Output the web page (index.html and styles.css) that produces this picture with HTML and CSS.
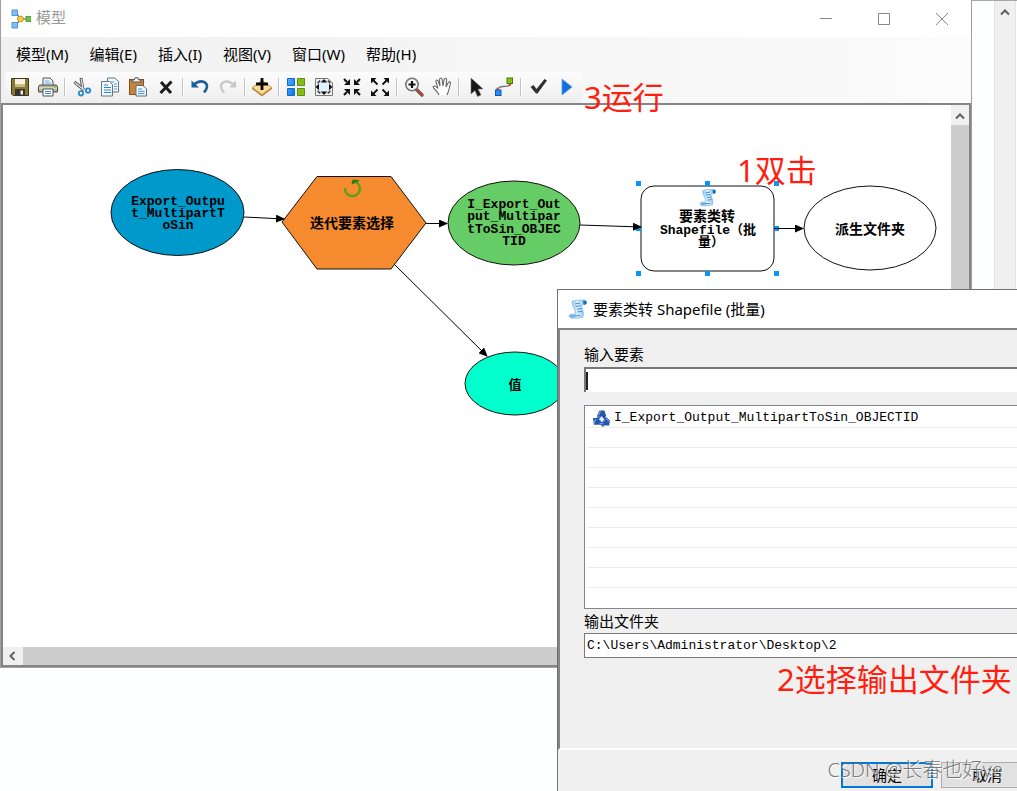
FILE: index.html
```html
<!DOCTYPE html>
<html lang="zh-CN">
<head>
<meta charset="utf-8">
<title>模型</title>
<link rel="stylesheet" href="styles.css">
</head>
<body>
<svg class="defs" aria-hidden="true">
  <defs>
    <linearGradient id="blueSq" x1="0" y1="0" x2="1" y2="1"><stop offset="0" stop-color="#4fb0ff"/><stop offset="1" stop-color="#0a74e0"/></linearGradient>
    <linearGradient id="paper" x1="0" y1="0" x2="1" y2="0"><stop offset="0" stop-color="#7cc0f4"/><stop offset=".5" stop-color="#e0f2ff"/><stop offset="1" stop-color="#6cb2ea"/></linearGradient>
    <symbol id="scroll" viewBox="0 0 20 20">
      <path d="M4 2.500Q7 1 16 1Q19 1 18.500 4Q18 6 16 5.500Q12.500 5.500 14 9Q16 14 15 18Q9 20 3 19Q.5 18 1.500 16Q3 14.500 7 15.500Q8 13 6 9Q4 6 4 2.500Z" fill="url(#paper)" stroke="#6baede" stroke-width=".7"/>
      <path d="M15 2Q19 1 18.500 4.500Q17 6.500 15.500 5Z" fill="#1f68b4"/>
      <path d="M7 5L12 4M7.500 7.500L12.500 6.700M9 10.200L13.500 9.500M9.500 13L14 12.300M3 17.300L12 16.500" stroke="#3c8ed2" stroke-width="1.100" fill="none"/>
    </symbol>
  </defs>
</svg>
<div class="desktop">
  <main class="window">
    <header class="titlebar">
      <svg class="app-icon" viewBox="0 0 20 20"><path d="M5 3L9 10L5 17M9 10H18" stroke="#2c5f94" stroke-width="1.200" fill="none"/><rect x="1" y="1" width="5.500" height="5.500" fill="#7fc0f2" stroke="#3a86cc" stroke-width=".8"/><rect x="1" y="13.500" width="5.500" height="5.500" fill="#7fc0f2" stroke="#3a86cc" stroke-width=".8"/><circle cx="9.500" cy="10" r="3" fill="#f8c840" stroke="#b9861a" stroke-width=".8"/><rect x="15" y="7.500" width="5" height="5" fill="#70c544" stroke="#3f8e22" stroke-width=".8"/></svg>
      <span class="title">模型</span>
      <button class="caption" aria-label="最小化"><svg viewBox="0 0 12 12"><path d="M0 5.500H12"/></svg></button>
      <button class="caption" aria-label="最大化"><svg viewBox="0 0 12 12"><path d="M.5 .5H11.500V11.500H.5Z"/></svg></button>
      <button class="caption" aria-label="关闭"><svg viewBox="0 0 12 12"><path d="M0 0L12 12M12 0L0 12"/></svg></button>
    </header>
    <nav class="menubar">
      <button>模型(M)</button><button>编辑(E)</button><button>插入(I)</button><button>视图(V)</button><button>窗口(W)</button><button>帮助(H)</button>
    </nav>
    <div class="toolrow">
    <div class="toolbar" role="toolbar">
      <button aria-label="保存"><svg viewBox="0 0 20 20"><path d="M1.500 1.500H18.500V18.500H3L1.500 17Z" fill="#8b7830" stroke="#3e3a22"/><rect x="5" y="2" width="10" height="7.500" fill="#f5f2e2"/><path d="M5 7H15V9.500H5Z" fill="#c9bf8c"/><rect x="5" y="12" width="10" height="6.500" fill="#35352f"/><rect x="10.500" y="13.500" width="2.500" height="4" fill="#eee"/></svg></button>
      <button aria-label="打印"><svg viewBox="0 0 20 20"><path d="M5 9V1H12L15 4V9Z" fill="#e8f3fc" stroke="#555"/><path d="M7 4H11M7 6H13" stroke="#71aee2"/><path d="M2 8H18Q20 8 19.500 15H.5Q0 8 2 8Z" fill="#b7b39a" stroke="#4b4b43"/><path d="M1 11H19" stroke="#f1efdd"/><path d="M5 12H15V19H5Z" fill="#fff" stroke="#555"/><path d="M7 14.500H13M7 16.500H13" stroke="#3b92dc"/><circle cx="17" cy="9.800" r="1" fill="#68c531"/></svg></button>
      <i class="sep"></i>
      <button aria-label="剪切"><svg viewBox="0 0 20 20"><path d="M2.500 5L12 13M9 1L11 13" stroke="#5a5a5a" stroke-width="3"/><path d="M3 5.500L12 13M9.300 2L11 12" stroke="#e8e8e8" stroke-width="1.200"/><circle cx="9" cy="16.300" r="2.200" fill="#fff" stroke="#2588ce" stroke-width="1.800"/><circle cx="16" cy="13.500" r="2.200" fill="#fff" stroke="#2588ce" stroke-width="1.800"/></svg></button>
      <button aria-label="复制"><svg viewBox="0 0 20 20"><path d="M7.500 1H15L18.500 4.500V15H7.500Z" fill="#eef6fd" stroke="#677680"/><path d="M10 5H14M14 7H17M14 9.500H17M14 12H17" stroke="#55a1e0"/><path d="M1.500 4.500H9.500L12.500 7.500V19H1.500Z" fill="#f5faff" stroke="#667580"/><path d="M4 8H8M4 10.500H11M4 13H11M4 15.500H11" stroke="#2b87d6" stroke-width="1.200"/></svg></button>
      <button aria-label="粘贴"><svg viewBox="0 0 20 20"><rect x="1.500" y="2.500" width="14" height="15" fill="#c98238" stroke="#83501c"/><path d="M4 5V3H6L7 .8H10L11 3H13V5Z" fill="#ededed" stroke="#555"/><path d="M8 8.500H15L18.500 12V19H8Z" fill="#f3f9ff" stroke="#5f6c78"/><path d="M10 12H14M10 14.300H16.500M10 16.600H16.500" stroke="#3b91da"/></svg></button>
      <button aria-label="删除"><svg viewBox="0 0 20 20"><path d="M5 5L15 16M15.500 4.500L4.500 16" stroke="#1b1b1b" stroke-width="3"/></svg></button>
      <i class="sep"></i>
      <button aria-label="撤销"><svg viewBox="0 0 20 20"><path d="M3.500 8Q9 3 14 5Q20 8 14 15.500" stroke="#1b5f9f" stroke-width="2.600" fill="none"/><path d="M1.500 3.500V10.500H9Z" fill="#1b5f9f"/></svg></button>
      <button aria-label="重做"><svg viewBox="0 0 20 20"><path d="M16 8Q11 3 6 5Q0 8 6 15.500" stroke="#c9c9c9" stroke-width="2.400" fill="none"/><path d="M18 3.500V10.500H11Z" fill="#c6c6c6"/></svg></button>
      <i class="sep"></i>
      <button aria-label="添加数据"><svg viewBox="0 0 20 20"><path d="M0 10.500L10 3L20 10.500V12L10 19.500L0 12Z" fill="#b3893f"/><path d="M.5 10.500L10 4L19.500 10.500L10 17.500Z" fill="#fcdc94" stroke="#cf9a48" stroke-width=".7"/><path d="M10 1V13M4 7H16" stroke="#050505" stroke-width="2.800"/></svg></button>
      <i class="sep"></i>
      <button aria-label="自动布局"><svg viewBox="0 0 20 20"><g stroke-width="1"><path d="M1.500 1.500H8.500V8.500H1.500ZM1.500 11.500H8.500V18.500H1.500Z" fill="url(#blueSq)" stroke="#1268c8"/><path d="M11.500 1.500H18.500V8.500H11.500ZM11.500 11.500H18.500V18.500H11.500Z" fill="#88bd19" stroke="#5b8f0f"/></g></svg></button>
      <button aria-label="全图"><svg viewBox="0 0 20 20"><path d="M1.500 1.500H14L18.500 6V18.500H1.500Z" fill="#f5f5f5" stroke="#777"/><circle cx="10" cy="10" r="6.500" fill="#dff1fb" stroke="#999"/><path d="M10 2L13 5.500H7ZM10 18L7 14.500H13ZM1.500 10L5 7V13ZM18.500 10L15 13V7Z" fill="#111"/><path d="M3.500 6L6 3.500M14 3.500L16.500 6M3.500 14L6 16.500M14 16.500L16.500 14" stroke="#333" stroke-width="1.200"/></svg></button>
      <button aria-label="缩小到中心"><svg viewBox="0 0 20 20"><path d="M2 2L5 5M18 2L15 5M2 18L5 15M18 18L15 15" stroke="#111" stroke-width="2.200"/><path d="M8 2V8H2ZM12 2V8H18ZM8 18V12H2ZM12 18V12H18Z" fill="#111"/></svg></button>
      <button aria-label="由中心放大"><svg viewBox="0 0 20 20"><path d="M3 3L7.500 7.500M17 3L12.500 7.500M3 17L7.500 12.500M17 17L12.500 12.500" stroke="#111" stroke-width="1.800"/><path d="M1 1H6.500L1 6.500ZM19 1H13.500L19 6.500ZM1 19V13.500L6.500 19ZM19 19V13.500L13.500 19Z" fill="#111"/></svg></button>
      <i class="sep"></i>
      <button aria-label="放大"><svg viewBox="0 0 20 20"><path d="M12.500 12.500L18 18" stroke="#925040" stroke-width="3.600" stroke-linecap="round"/><circle cx="8" cy="7.500" r="6.200" fill="#f7f7f7" stroke="#777" stroke-width="1.600"/><path d="M8 4V11M4.500 7.500H11.500" stroke="#111" stroke-width="2.200"/></svg></button>
      <button aria-label="平移"><svg viewBox="0 0 20 20"><path d="M7 18Q6 15 2 11.500Q.5 9.500 2 9Q4 9 6 11.500L4 5Q3.500 3 5 3Q6 3 6.500 5L8 9L7.500 3Q7.500 1 9 1Q10 1 10.200 3L11 9L12 3Q12.500 1 14 1.500Q15 2 14.500 4L14 10L16 6Q17.500 4 18.500 5.500Q19 6 18 8Q17 14 15 18" fill="#fff" stroke="#676767" stroke-width="1.100"/></svg></button>
      <i class="sep"></i>
      <button aria-label="选择"><svg viewBox="0 0 20 20"><path d="M5 1L17 12H12L15 18L11.500 19.500L9 13.500L5 17Z" fill="#171717" stroke="#777" stroke-width=".6"/></svg></button>
      <button aria-label="连接"><svg viewBox="0 0 20 20"><path d="M4.500 12Q5 9.500 9 9.500Q14.500 9.500 15.500 8" stroke="#777" stroke-width="1.400" fill="none"/><path d="M3 10L5 13H2ZM16 9.500L14.500 7H17.500Z" fill="#e33"/><rect x="1.500" y="13" width="5.500" height="5.500" fill="#2590f2" stroke="#0d56b8"/><rect x="13" y="1" width="5.500" height="5.500" fill="#84bd14" stroke="#477a07"/></svg></button>
      <i class="sep"></i>
      <button aria-label="验证"><svg viewBox="0 0 20 20"><path d="M2.500 10L5.500 8L8.500 12L16.500 2L19 3.500L9.500 16.500H8Z" fill="#303030"/></svg></button>
      <button aria-label="运行"><svg viewBox="0 0 20 20"><path d="M6 2L16 10L6 18Z" fill="#166fda" stroke="#539cec" stroke-width=".8"/></svg></button>
    </div>
    </div>
    <section class="workspace">
      <svg class="canvas" role="img" aria-label="模型图">
        <defs><marker id="arrow" viewBox="0 0 9 8" markerWidth="9" markerHeight="8" refX="8" refY="4" orient="auto" markerUnits="userSpaceOnUse"><path d="M0 0L9 4L0 8Z"/></marker></defs>
        <g transform="translate(-3 -105)">
          <g class="node">
            <ellipse cx="177.500" cy="212.500" rx="66.500" ry="43" fill="#0099cc"/>
            <path d="M317 176.500H391L426 223L391 269H317L282 222Z" fill="#f68a2e"/>
            <ellipse cx="514" cy="223" rx="66" ry="42" fill="#66cc66"/>
            <rect x="641" y="186" width="133" height="85" rx="13" fill="#fff"/>
            <ellipse cx="870" cy="228" rx="66" ry="42" fill="#fff"/>
            <ellipse cx="515" cy="383.500" rx="50" ry="31.500" fill="#00ffcc"/>
          </g>
          <path d="M345 188A7.500 7.500 0 1 0 356 182" fill="none" stroke="#55a01d" stroke-width="2.200"/><path d="M352 184L353 180L359 180.500Z" fill="#287c13" stroke="#287c13"/>
          <use href="#scroll" x="699" y="188" width="18" height="19"/>
          <g class="handles">
            <path d="M636 181h5v5h-5zM705 181h5v5h-5zM774 181h5v5h-5zM774 226h5v5h-5zM636 271h5v5h-5zM705 271h5v5h-5zM774 271h5v5h-5zM636 226h5v5h-5z"/>
          </g>
          <g class="edge">
            <path d="M244 217L284 219"/><path d="M426 223.500H447"/><path d="M580 225L641 227"/><path d="M774 228.500H803"/><path d="M395 265L487 356"/>
          </g>
          <g class="label">
            <text x="178" y="205">Export_Outpu</text><text x="178" y="217">t_MultipartT</text><text x="178" y="229">oSin</text>
            <text x="352" y="228" class="han">迭代要素选择</text>
            <text x="514" y="208">I_Export_Out</text><text x="514" y="220">put_Multipar</text><text x="514" y="233">tToSin_OBJEC</text><text x="514" y="245">TID</text>
            <text x="707" y="221" class="han">要素类转</text><text x="708" y="234">Shapefile（批</text><text x="711" y="246">量）</text>
            <text x="870" y="234" class="han">派生文件夹</text>
            <text x="515" y="389">值</text>
          </g>
        </g>
      </svg>
      <div class="vscroll"><svg viewBox="0 0 10 8"><path d="M1 6.500L5 2.500L9 6.500"/></svg><div class="thumb"></div></div>
      <div class="hscroll"><svg viewBox="0 0 8 10"><path d="M6.500 1L2.500 5L6.500 9"/></svg><div class="thumb"></div></div>
    </section>
  </main>
  <aside class="backdrop"><div class="page-scroll"><svg viewBox="0 0 10 8"><path d="M1 6.500L5 2.500L9 6.500"/></svg></div></aside>

  <section class="dialog" role="dialog" aria-label="要素类转 Shapefile (批量)">
    <header class="dialog-title"><svg><use href="#scroll"/></svg><span>要素类转 Shapefile (批量)</span></header>
    <div class="dialog-body">
      <label for="in">输入要素</label>
      <div class="field sunken"><i class="caret"></i><input id="in" type="text"></div>
      <ul class="list">
        <li><svg viewBox="0 0 20 18"><path d="M6 5L8 1H13L15 7H14L19 12L18 17H12V19L9 16H2L1 9H5Z" fill="#2456ac"/><path d="M10 7L7 11H9V13H12V11L14 12Z" fill="#e8f0fb"/><path d="M7 6L9 2M2 15L4 10M14 8L18 13M5 8L8 8M12 15H8" stroke="#8fb4e8"/></svg>I_Export_Output_MultipartToSin_OBJECTID</li>
        <li></li><li></li><li></li><li></li><li></li><li></li><li></li><li></li>
      </ul>
      <label for="out">输出文件夹</label>
      <div class="field"><input id="out" type="text" value="C:\Users\Administrator\Desktop\2"></div>
    </div>
    <footer class="dialog-footer"><button class="primary">确定</button><button>取消</button></footer>
  </section>

  <span class="note note-run">3运行</span>
  <span class="note note-open">1双击</span>
  <span class="note note-folder">2选择输出文件夹</span>
  <span class="watermark">CSDN @长春也好ye</span>
</div>
</body>
</html>
```
FILE: styles.css
```css
* { box-sizing: border-box; }
body {
  margin: 0;
  background: #fdfefe;
  color: #000;
  font: 15px/20px "Noto Sans", "Noto Sans CJK SC", sans-serif;
}
button { font: inherit; color: inherit; border: 0; background: none; padding: 0; }
.defs { position: absolute; width: 0; height: 0; }

.desktop {
  position: relative;
  display: flex;
  height: 100vh;
  min-height: 600px;
  overflow: hidden;
}

/* Model window */
.window {
  flex: 1;
  min-width: 0;
  display: flex;
  flex-direction: column;
  margin-bottom: 123px;
  border: solid #a0a0a0;
  border-width: 0 1px 1px;
  background: linear-gradient(90deg, #f0f0f0, #fbfbfb);
}
.titlebar {
  display: flex;
  align-items: center;
  height: 37px;
  padding-left: 10px;
  background: #fff;
  color: #999;
}
.app-icon { width: 20px; height: 20px; }
.title { flex: 1; padding-left: 5px; line-height: 20px; margin-bottom: 4px; }
.caption { width: 58px; height: 36px; display: grid; place-items: center; }
.caption svg { width: 12px; height: 12px; fill: none; stroke: #888; }
.menubar { display: flex; gap: 21px; height: 35px; padding: 0 15px 2px; align-items: center; }
.toolrow { display: flex; height: 31px; padding-left: 4px; }
.toolbar {
  display: flex;
  align-items: center;
  gap: 8px;
  padding: 0 6px 2px 5px;
  border-radius: 4px;
  background: linear-gradient(#fcfcfc, #eeeeee);
}
.toolbar button { width: 20px; height: 20px; }
.toolbar svg { display: block; width: 20px; height: 20px; overflow: visible; }
.sep { width: 2px; height: 18px; margin: 0 -2px; border-left: 1px solid #c2c2c2; background: #fff; }

.workspace {
  flex: 1;
  min-height: 0;
  display: grid;
  grid-template: minmax(0, 1fr) 18px / minmax(0, 1fr) 18px;
  border: 2px solid #858585;
  background: #fff;
}
.canvas { width: 100%; height: 100%; }
.edge { fill: none; stroke: #000; }
.edge path { marker-end: url(#arrow); }
.node { stroke: #111; }
.handles { fill: #0a96f5; }
.label {
  text-anchor: middle;
  font: bold 13px "Liberation Mono", "Noto Sans CJK SC", monospace;
}
.label .han { font-size: 14px; }
.vscroll { display: flex; flex-direction: column; background: #f0f0f0; }
.vscroll svg, .page-scroll svg { width: 10px; height: 8px; margin: 7px auto 5px; }
.hscroll { grid-column: 1 / 3; display: flex; align-items: center; background: #f0f0f0; }
.hscroll svg { width: 8px; height: 10px; margin: 0 7px 0 5px; }
.vscroll path, .hscroll path, .page-scroll path { fill: none; stroke: #606060; stroke-width: 2; }
.thumb { flex: 1; align-self: stretch; background: #cdcdcd; }

/* Page behind the window */
.backdrop { width: 45px; padding-left: 22px; border-top: 1px solid #a8a8a8; }
.page-scroll {
  display: flex;
  height: 100%;
  width: 22px;
  border: solid #e3e3e3;
  border-width: 0 1px;
  background: #f0f0f0;
}

/* Tool dialog */
.dialog {
  position: absolute;
  left: 557px;
  right: 0;
  top: 289px;
  bottom: 0;
  display: flex;
  flex-direction: column;
  border: solid #707070;
  border-width: 1px 0 0 1px;
  background: #f0f0f0;
  overflow: hidden;
}
.dialog-title { display: flex; align-items: center; gap: 5px; height: 38px; padding-left: 10px; background: #fff; }
.dialog-title svg { width: 20px; height: 20px; }
.dialog-body {
  flex: 1;
  display: flex;
  flex-direction: column;
  padding: 14px 0 0 24px;
  border: solid #858585;
  border-width: 2px 0 0 2px;
  border-bottom: 2px solid #fff;
}
.dialog-body label { line-height: 20px; }
.field {
  display: flex;
  align-items: center;
  height: 25px;
  margin-top: 2px;
  padding-left: 2px;
  border: 1px solid #7a7a7a;
  border-right: 0;
  background: #fff;
}
.sunken { margin-top: 3px; border: solid #777; border-width: 2px 0 0 2px; padding-left: 0; }
.caret { width: 2px; height: 18px; background: #222; }
.field input { flex: 1; min-width: 0; height: 20px; border: 0; padding: 0; outline: 0; background: none; }
.field input, .list { font: 13px/20px "Liberation Mono", "Noto Sans CJK SC", monospace; }
.list {
  height: 204px;
  margin: 13px 0 2px;
  padding: 2px 0 0 2px;
  list-style: none;
  border: 1px solid #828790;
  border-right: 0;
  background: #fff;
}
.list li { display: flex; align-items: center; gap: 3px; height: 20px; padding-left: 5px; border-bottom: 1px solid #ececec; }
.list svg { width: 19px; height: 18px; }
.dialog-footer {
  display: flex;
  justify-content: flex-end;
  gap: 8px;
  height: 41px;
  padding-top: 12px;
  margin-right: -16px;
}
.dialog-footer button { width: 92px; height: 26px; border: 1px solid #adadad; background: #e1e1e1; }
.dialog-footer .primary { border: 2px solid #0078d7; }

/* Red annotations and watermark */
.note { position: absolute; color: #ff1e0f; font-size: 31px; line-height: 40px; white-space: nowrap; }
.note-run { left: 584px; top: 77px; }
.note-open { left: 737px; top: 150px; }
.note-folder { left: 777px; top: 659px; }
.watermark {
  position: absolute;
  right: 14px;
  bottom: 8px;
  font-size: 20px;
  line-height: 26px;
  font-weight: 300;
  color: rgba(100, 100, 100, .85);
  text-shadow: 1px 1px 1px #fff;
  white-space: nowrap;
}
```
